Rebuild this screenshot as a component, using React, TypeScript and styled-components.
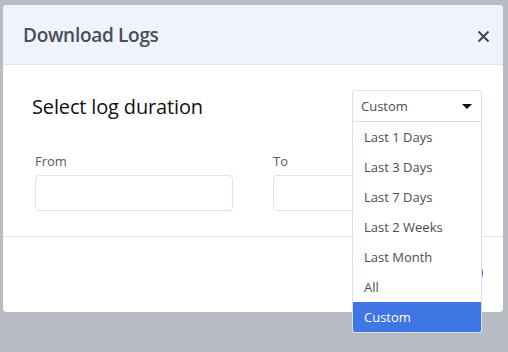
import React from "react";
import styled, { createGlobalStyle } from "styled-components";

const GlobalStyle = createGlobalStyle`
  html, body {
    margin: 0;
    padding: 0;
    background: #b8bbc4;
    font-family: "Open Sans", "Noto Sans", sans-serif;
  }
  html, body, #root {
    height: 100%;
  }
`;

const Modal = styled.div`
  margin: 5px 0 0 3px;
  width: 500px;
  background: #fff;
  border-radius: 4px;
`;

const Header = styled.div`
  display: flex;
  align-items: center;
  justify-content: space-between;
  height: 59px;
  padding: 0 12px 0 20px;
  background: #eef3fd;
  border-bottom: 1px solid #dce6f8;
  border-radius: 4px 4px 0 0;
`;

const Title = styled.h2`
  margin: 0;
  font-size: 19px;
  font-weight: 600;
  color: #4a4e55;
  letter-spacing: -0.3px;
`;

const Close = styled.button`
  border: none;
  background: none;
  padding: 0;
  width: 16px;
  height: 16px;
  display: flex;
  align-items: center;
  justify-content: center;
  cursor: pointer;
  margin-top: 3px;
`;

const Body = styled.div`
  padding: 25px 21px 25px 29px;
  border-bottom: 1px solid #e4e6ea;
`;

const TopRow = styled.div`
  display: flex;
  align-items: center;
  justify-content: space-between;
  height: 32px;
`;

const Heading = styled.div`
  font-size: 20px;
  color: #111;
  letter-spacing: -0.15px;
`;

const SelectWrap = styled.div`
  position: relative;
  width: 130px;
`;

const SelectBox = styled.div`
  box-sizing: border-box;
  height: 32px;
  border: 1px solid #d6e0f5;
  border-radius: 3px 3px 0 0;
  display: flex;
  align-items: center;
  justify-content: space-between;
  padding: 0 9px 0 8px;
  font-size: 13px;
  color: #4a4e55;
  background: #fff;
`;

const Caret = styled.span`
  width: 0;
  height: 0;
  border-left: 5px solid transparent;
  border-right: 5px solid transparent;
  border-top: 5px solid #111;
`;

const Menu = styled.ul`
  position: absolute;
  top: 32px;
  left: 0;
  right: 0;
  margin: 0;
  padding: 0;
  list-style: none;
  background: #fff;
  border: 1px solid #d6e0f5;
  border-top: none;
  border-radius: 0 0 3px 3px;
  overflow: hidden;
  z-index: 10;
`;

const Option = styled.li<{ $active?: boolean }>`
  height: 30px;
  display: flex;
  align-items: center;
  padding-left: 11px;
  font-size: 13px;
  color: ${(p) => (p.$active ? "#fff" : "#4a4e55")};
  background: ${(p) => (p.$active ? "#4075e4" : "#fff")};
`;

const Fields = styled.div`
  display: grid;
  grid-template-columns: 198px 198px;
  column-gap: 40px;
  padding-left: 3px;
  margin-top: 30px;
`;

const Field = styled.div`
  display: flex;
  flex-direction: column;
`;

const Label = styled.label`
  font-size: 13px;
  color: #555a62;
  margin-bottom: 5px;
`;

const Input = styled.input`
  box-sizing: border-box;
  height: 36px;
  border: 1px solid #dbe4f6;
  border-radius: 4px;
  outline: none;
`;

const Footer = styled.div`
  height: 75px;
  display: flex;
  align-items: center;
  justify-content: flex-end;
  padding-right: 20px;
`;

const Button = styled.button`
  height: 22px;
  width: 90px;
  margin-bottom: 3px;
  border: none;
  border-radius: 11px;
  background: #4075e4;
  color: #fff;
  font-size: 13px;
`;

const options = ["Last 1 Days", "Last 3 Days", "Last 7 Days", "Last 2 Weeks", "Last Month", "All", "Custom"];

export default function App() {
  const selected = "Custom";
  return (
    <>
      <GlobalStyle />
      <Modal>
        <Header>
          <Title>Download Logs</Title>
          <Close>
            <svg width="13" height="13" viewBox="0 0 13 13">
              <path d="M1.5 1.5 L11.5 11.5 M11.5 1.5 L1.5 11.5" stroke="#444" strokeWidth="2" />
            </svg>
          </Close>
        </Header>
        <Body>
          <TopRow>
            <Heading>Select log duration</Heading>
            <SelectWrap>
              <SelectBox>
                {selected}
                <Caret />
              </SelectBox>
              <Menu>
                {options.map((o) => (
                  <Option key={o} $active={o === selected}>
                    {o}
                  </Option>
                ))}
              </Menu>
            </SelectWrap>
          </TopRow>
          <Fields>
            <Field>
              <Label>From</Label>
              <Input />
            </Field>
            <Field>
              <Label>To</Label>
              <Input />
            </Field>
          </Fields>
        </Body>
        <Footer>
          <Button>Download</Button>
        </Footer>
      </Modal>
    </>
  );
}
